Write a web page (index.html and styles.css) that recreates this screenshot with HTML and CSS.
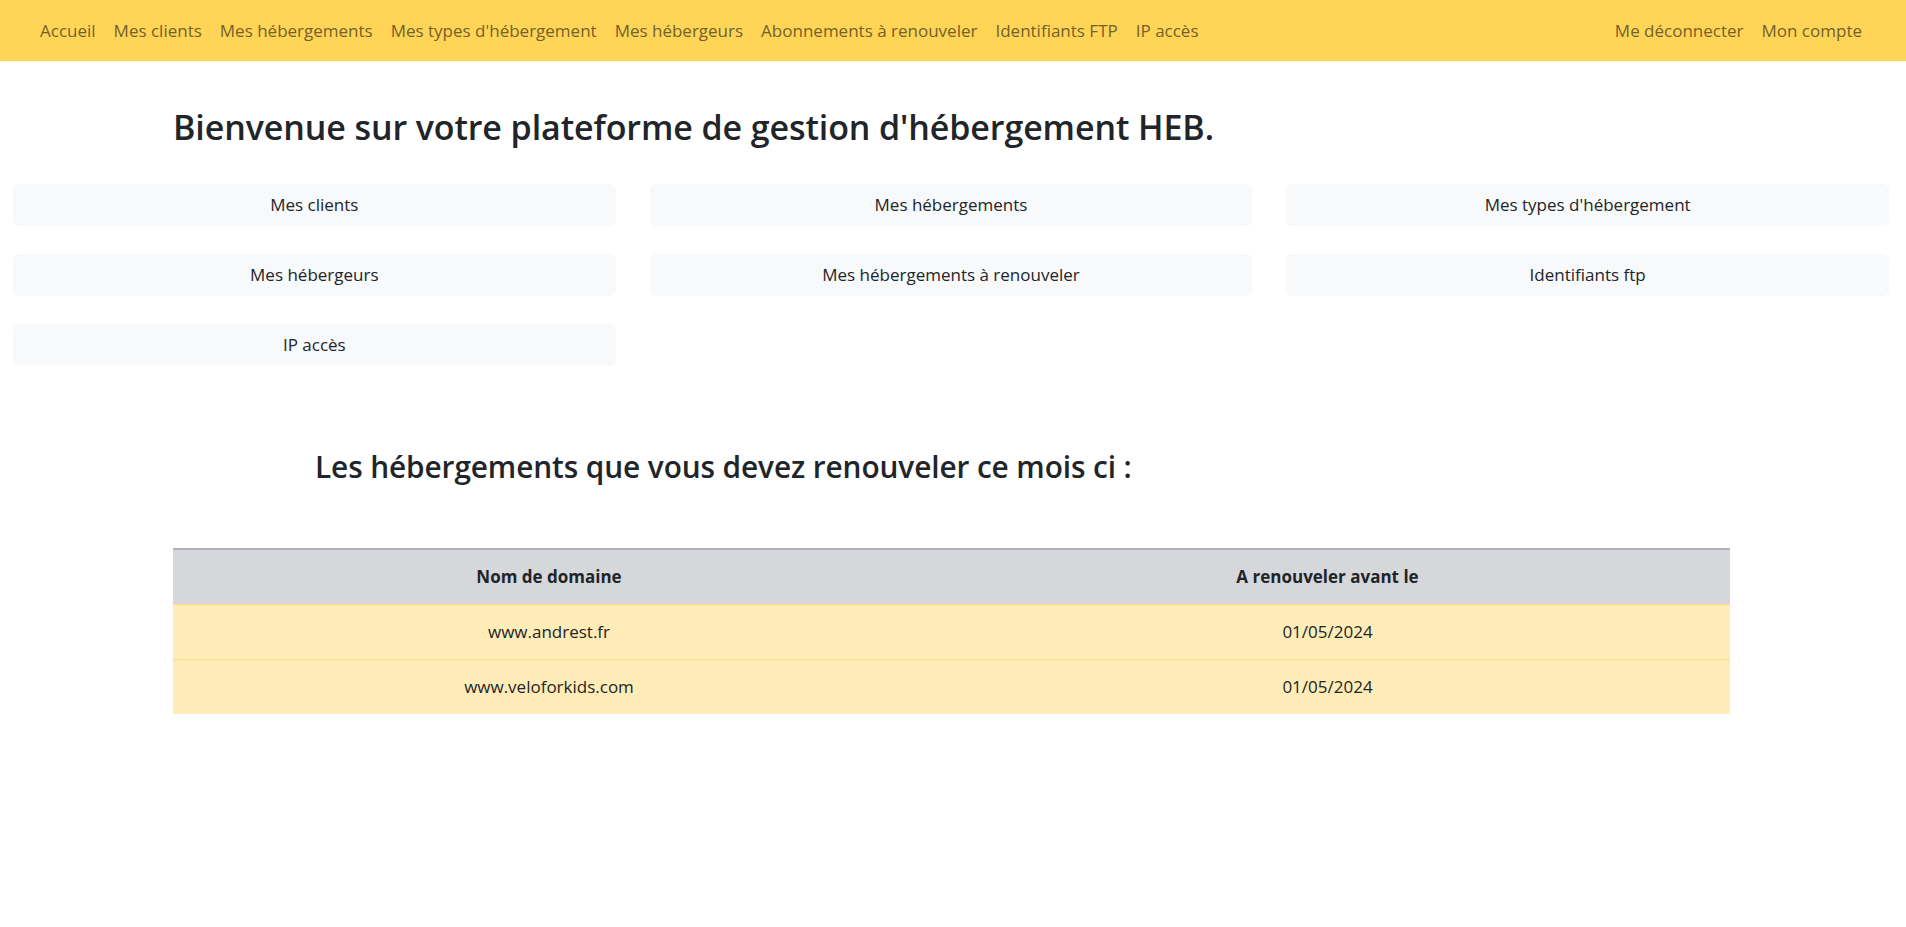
FILE: index.html
```html
<!DOCTYPE html>
<html lang="fr">
<head>
<meta charset="utf-8">
<title>HEB</title>
<link rel="stylesheet" href="styles.css">
</head>
<body>
<nav class="navbar">
  <ul class="nav-left">
    <li><a href="#">Accueil</a></li>
    <li><a href="#">Mes clients</a></li>
    <li><a href="#">Mes hébergements</a></li>
    <li><a href="#">Mes types d'hébergement</a></li>
    <li><a href="#">Mes hébergeurs</a></li>
    <li><a href="#">Abonnements à renouveler</a></li>
    <li><a href="#">Identifiants FTP</a></li>
    <li><a href="#">IP accès</a></li>
  </ul>
  <ul class="nav-right">
    <li><a href="#">Me déconnecter</a></li>
    <li><a href="#">Mon compte</a></li>
  </ul>
</nav>
<main>
  <h1 class="title">Bienvenue sur votre plateforme de gestion d'hébergement HEB.</h1>
  <div class="buttons">
    <a class="btn" href="#">Mes clients</a>
    <a class="btn" href="#">Mes hébergements</a>
    <a class="btn" href="#">Mes types d'hébergement</a>
    <a class="btn" href="#">Mes hébergeurs</a>
    <a class="btn" href="#">Mes hébergements à renouveler</a>
    <a class="btn" href="#">Identifiants ftp</a>
    <a class="btn" href="#">IP accès</a>
  </div>
  <h2 class="subtitle">Les hébergements que vous devez renouveler ce mois ci :</h2>
  <table class="renew">
    <thead>
      <tr><th class="col-name">Nom de domaine</th><th>A renouveler avant le</th></tr>
    </thead>
    <tbody>
      <tr><td>www.andrest.fr</td><td>01/05/2024</td></tr>
      <tr><td>www.veloforkids.com</td><td>01/05/2024</td></tr>
    </tbody>
  </table>
</main>
</body>
</html>
```
FILE: styles.css
```css
* { box-sizing: border-box; }
html, body {
  margin: 0;
  padding: 0;
  background: #ffffff;
  color: #212529;
  font-family: "Open Sans", "Noto Sans", sans-serif;
  font-size: 17px;
}
a { text-decoration: none; }

.navbar {
  height: 61px;
  background: #ffd557;
  display: flex;
  align-items: center;
  justify-content: space-between;
  padding: 0 35px 0 31px;
}
.navbar ul {
  list-style: none;
  margin: 0;
  padding: 0;
  display: flex;
}
.navbar a {
  display: block;
  padding: 8px 9px;
  color: #74612a;
  line-height: 26px;
}

.title {
  margin: 40px 0 30px 173px;
  font-size: 34px;
  font-weight: 600;
  line-height: 53px;
  letter-spacing: -0.1px;
}

.buttons {
  display: grid;
  grid-template-columns: repeat(3, 1fr);
  column-gap: 34px;
  row-gap: 28px;
  padding: 0 17px 0 13px;
}
.btn {
  display: block;
  height: 42px;
  line-height: 42px;
  text-align: center;
  background: #f8f9fa;
  border-radius: 6px;
  color: #212529;
}

.subtitle {
  margin: 80px 0 60px 315px;
  font-size: 29.8px;
  font-weight: 600;
  line-height: 42px;
  letter-spacing: -0.1px;
}

.renew {
  margin-left: 173px;
  width: 1557px;
  border-collapse: collapse;
  text-align: center;
}
.renew th {
  background: #d6d7db;
  border-top: 2px solid #b1b2b6;
  height: 55px;
  font-weight: 700;
  color: #212529;
}
.renew .col-name { width: 752px; }
.renew td {
  background: #ffecb6;
  border-top: 1px solid #ffdf86;
  height: 55px;
}
```
